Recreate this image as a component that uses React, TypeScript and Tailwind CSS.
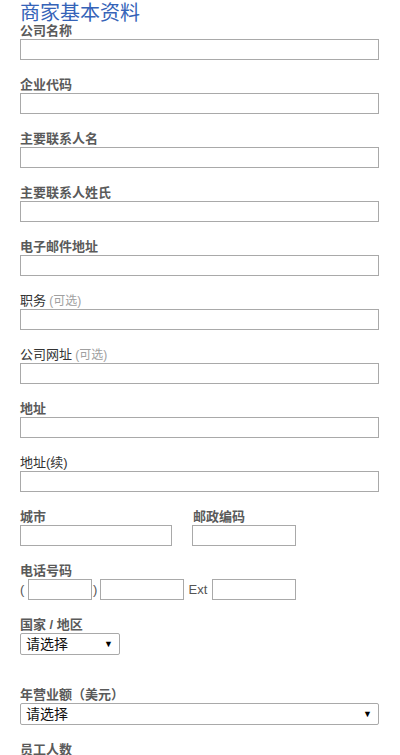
import React from "react";

const font = { fontFamily: '"Liberation Sans", "Noto Sans CJK SC", sans-serif' };

function Label({ children, bold = true }: { children: React.ReactNode; bold?: boolean }) {
  return (
    <div
      className={
        "text-[13px] leading-[16px] h-[16px] whitespace-nowrap " +
        (bold ? "font-bold text-[#5a5a5a]" : "text-[#333]")
      }
    >
      {children}
    </div>
  );
}

function Input({ className = "w-full" }: { className?: string }) {
  return <div className={"h-[21px] border border-[#a9a9a9] bg-white box-border " + className} />;
}

function Select({ className }: { className: string }) {
  return (
    <div
      className={
        "h-[22px] border border-[#a9a9a9] rounded-[2px] bg-white box-border flex items-center justify-between pl-[5px] pr-[6px] " +
        className
      }
    >
      <span className="text-[14px] leading-[16px] text-[#111]">请选择</span>
      <span className="text-[9px] leading-none text-black">▼</span>
    </div>
  );
}

function Field({ label, bold = true, optional = false }: { label: string; bold?: boolean; optional?: boolean }) {
  return (
    <div className="mb-[17px]">
      <Label bold={bold}>
        {label}
        {optional && <span className="text-[#a0a0a0] text-[12px]"> (可选)</span>}
      </Label>
      <Input />
    </div>
  );
}

export default function App() {
  return (
    <div className="w-[400px] h-[755px] overflow-hidden bg-white pl-[20px] pr-[21px]" style={font}>
      <div className="h-[23px] overflow-visible">
        <div className="text-[20px] leading-[27px] text-[#3563b8] whitespace-nowrap">商家基本资料</div>
      </div>
      <Field label="公司名称" />
      <Field label="企业代码" />
      <Field label="主要联系人名" />
      <Field label="主要联系人姓氏" />
      <Field label="电子邮件地址" />
      <Field label="职务" bold={false} optional />
      <Field label="公司网址" bold={false} optional />
      <Field label="地址" />
      <Field label="地址(续)" bold={false} />
      <div className="mb-[17px] flex gap-[20px]">
        <div>
          <Label>城市</Label>
          <Input className="w-[152px]" />
        </div>
        <div className="pl-px">
          <Label>邮政编码</Label>
          <Input className="w-[104px] -ml-px" />
        </div>
      </div>
      <div className="mb-[17px]">
        <Label>电话号码</Label>
        <div className="flex items-center text-[13px] leading-[21px] text-[#555]">
          <span className="w-[8px]">(</span>
          <Input className="w-[64px]" />
          <span className="w-[8px] pl-[1px]">)</span>
          <Input className="w-[84px]" />
          <span className="w-[28px] text-center">Ext</span>
          <Input className="w-[84px]" />
        </div>
      </div>
      <div className="mb-[32px]">
        <Label>国家 / 地区</Label>
        <Select className="w-[100px]" />
      </div>
      <div className="mb-[17px]">
        <Label>年营业额（美元）</Label>
        <Select className="w-full" />
      </div>
      <Label>员工人数</Label>
    </div>
  );
}
